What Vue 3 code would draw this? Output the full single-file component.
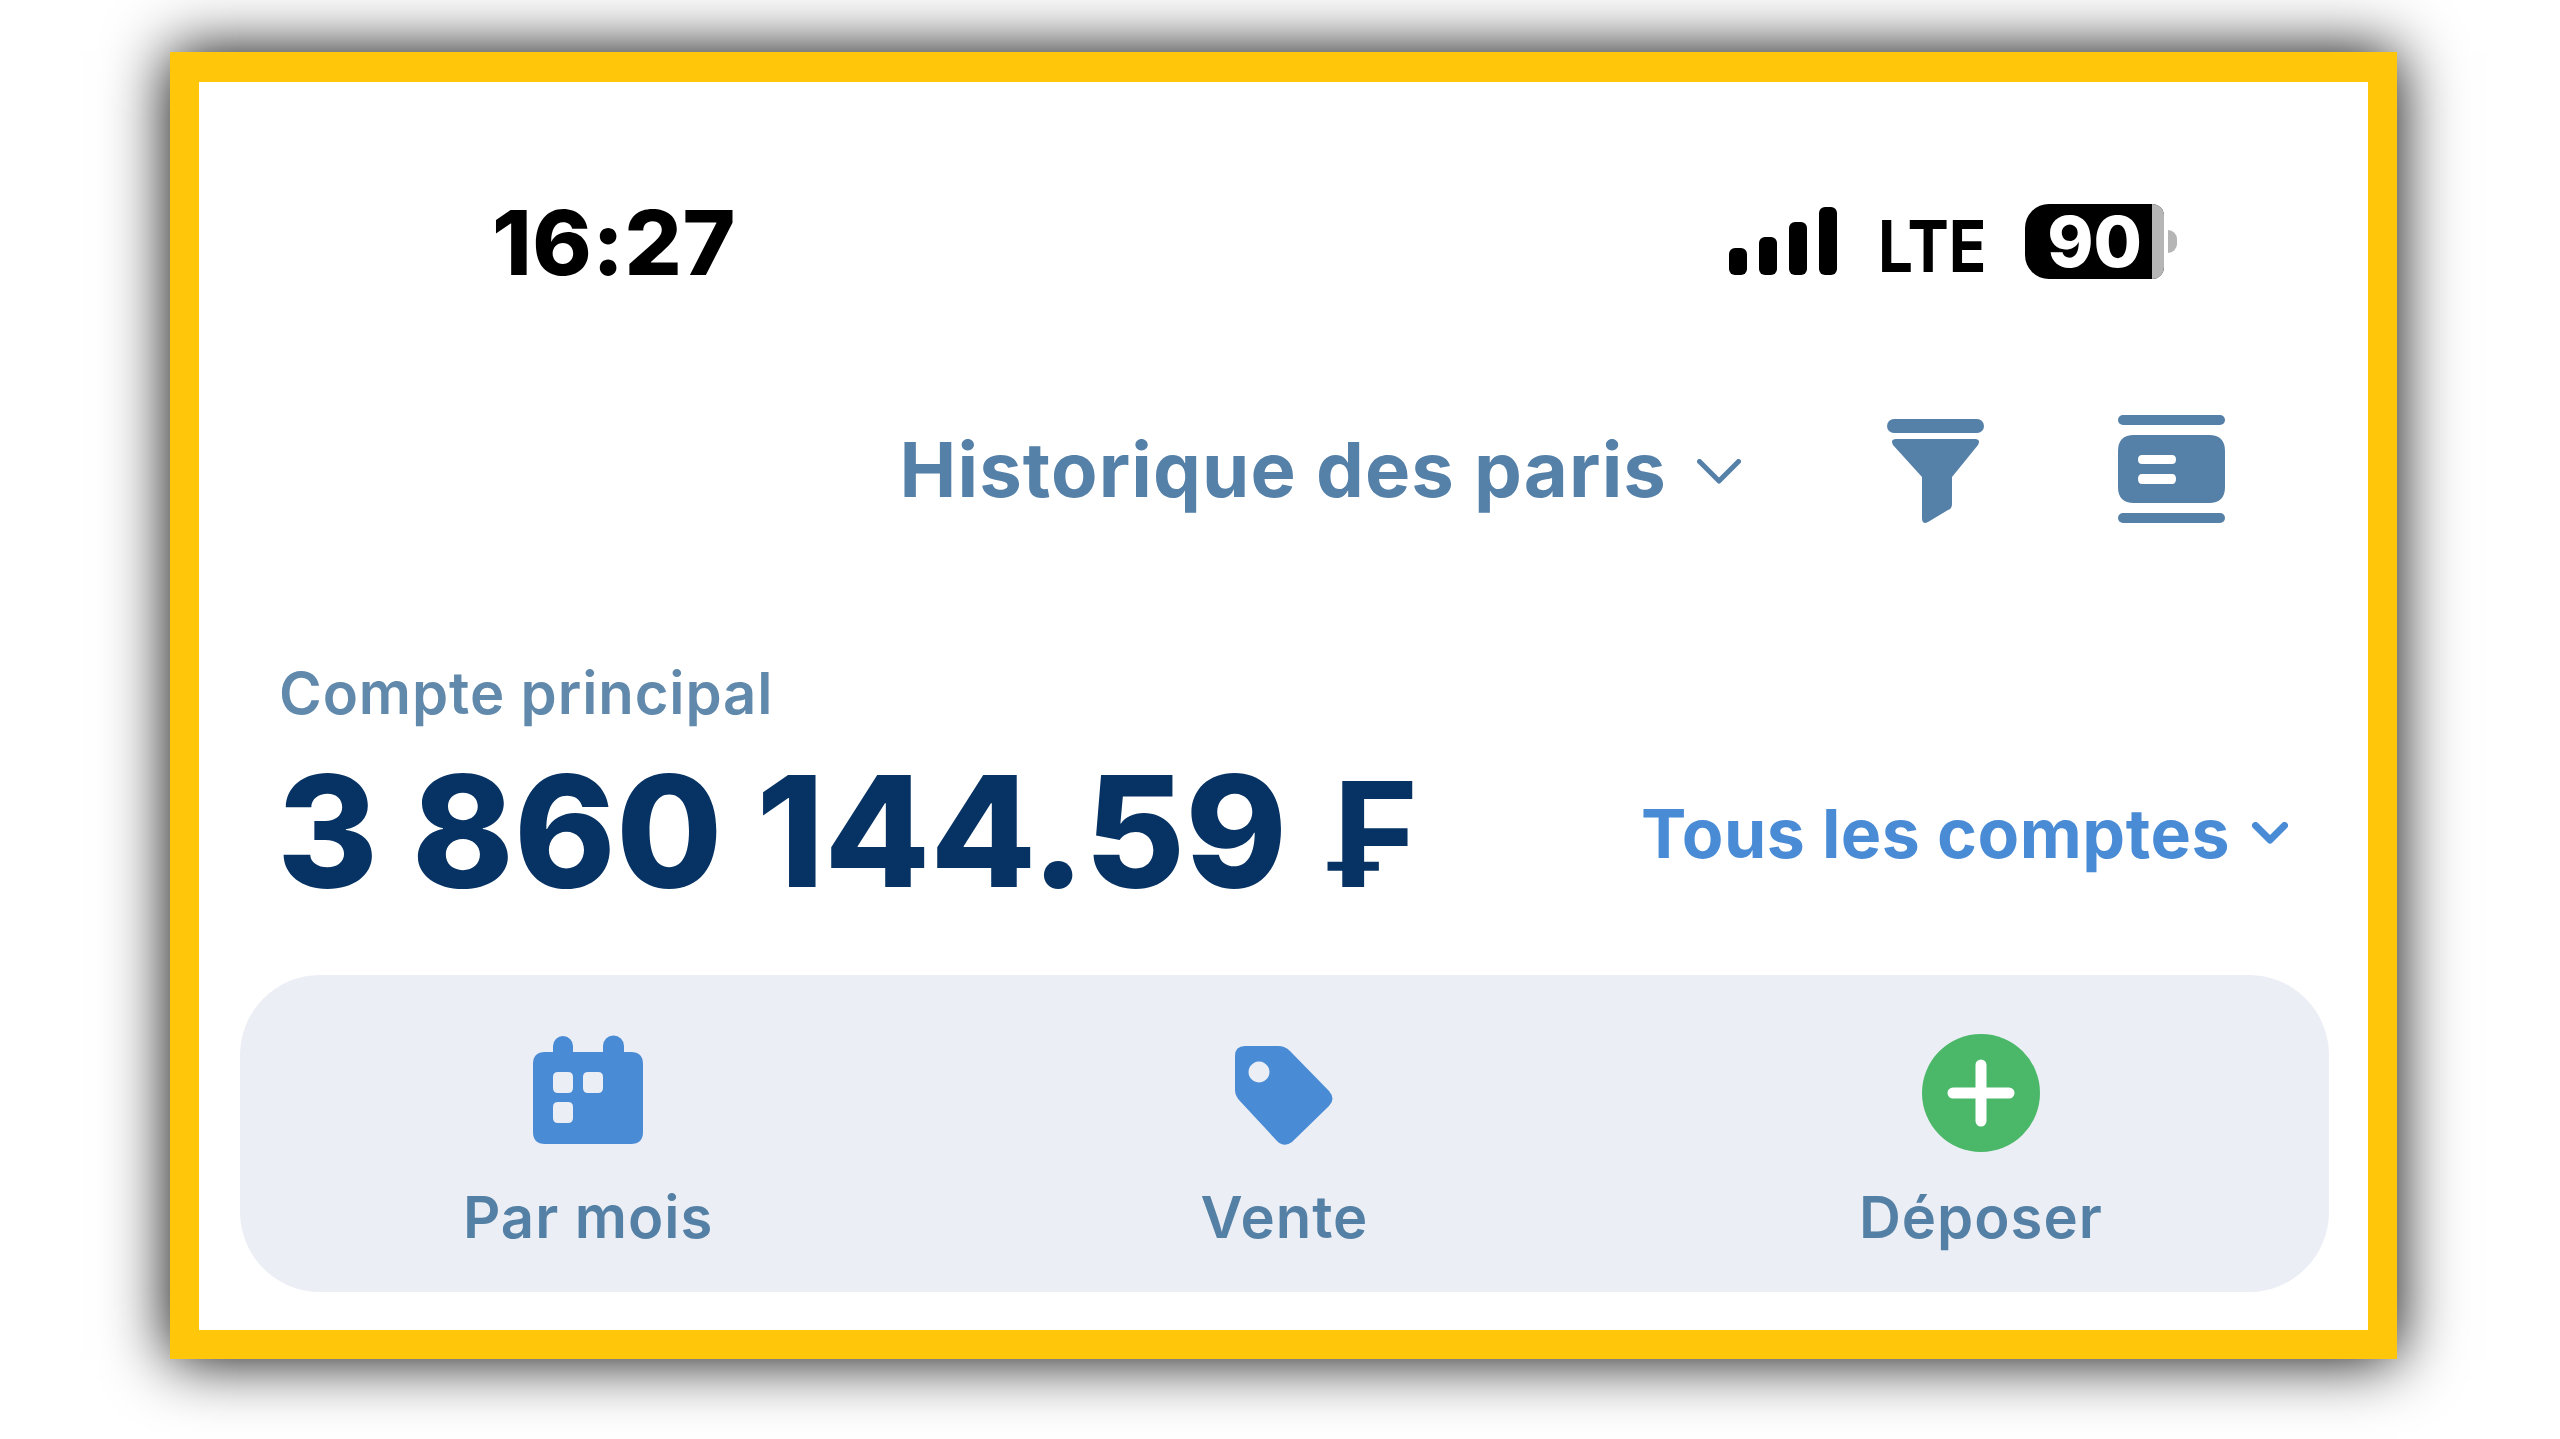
<template>
  <div class="page">
    <main class="frame">
      <div class="status">
        <span class="time">16:27</span>
        <div class="status-right">
          <svg class="bars" width="108" height="68" viewBox="0 0 108 68">
            <rect x="0" y="41" width="18" height="27" rx="6" />
            <rect x="30" y="30" width="18" height="38" rx="6" />
            <rect x="60" y="15" width="18" height="53" rx="6" />
            <rect x="90" y="0" width="18" height="68" rx="6" />
          </svg>
          <span class="lte"><span class="lte-in">LTE</span></span>
          <div class="batt">
            <div class="batt-body">
              <span class="batt-num">90</span>
              <span class="batt-rest"></span>
            </div>
            <span class="batt-nub"></span>
          </div>
        </div>
      </div>

      <header class="topbar">
        <h1 class="title">Historique des paris</h1>
        <svg class="chev" width="44" height="25" viewBox="0 0 44 25">
          <path d="M2.5 2.5 22 22 41.5 2.5" fill="none" stroke="#5580a8" stroke-width="5" stroke-linecap="round" stroke-linejoin="round" />
        </svg>
        <svg class="funnel" width="97" height="106" viewBox="0 0 97 106" fill="#5580a8">
          <rect x="0" y="0" width="97" height="14" rx="7" />
          <path d="M9 20H88Q94 20 91 26L65 58V85Q65 90 61 91L41 103Q35 106 35 99V58L6 26Q3 20 9 20Z" />
        </svg>
        <svg class="book" width="107" height="108" viewBox="0 0 107 108" fill="#5580a8">
          <rect x="0" y="0" width="107" height="10" rx="5" />
          <path fill-rule="evenodd" d="M16 20H91Q107 20 107 36V72Q107 88 91 88H16Q0 88 0 72V36Q0 20 16 20ZM24 40Q20 40 20 44.500Q20 49 24 49H54Q58 49 58 44.500Q58 40 54 40ZM24 59Q20 59 20 64Q20 69 24 69H54Q58 69 58 64Q58 59 54 59Z" />
          <rect x="0" y="98" width="107" height="10" rx="5" />
        </svg>
      </header>

      <p class="label">Compte principal</p>
      <div class="balance-row">
        <span class="balance">3 860 144.59 <span class="currency">₣</span></span>
        <button class="accounts">
          <span>Tous les comptes</span>
          <svg width="36" height="22" viewBox="0 0 36 22">
            <path d="M3.5 3.5 18 18 32.5 3.5" fill="none" stroke="#4a8bd6" stroke-width="7" stroke-linecap="round" stroke-linejoin="round" />
          </svg>
        </button>
      </div>

      <section class="panel">
        <div v-for="item in actions" :key="item.label" class="action">
          <svg width="120" height="120" viewBox="0 0 120 120">
            <template v-if="item.icon === 'calendar'">
              <path fill="#4a8bd6" fill-rule="evenodd" d="M25 13a10 10 0 0 1 20 0V19H75V13a10.500 10.500 0 0 1 21 0V19H103Q115 19 115 31V99Q115 111 103 111H17Q5 111 5 99V31Q5 19 17 19H25ZM30 39Q25 39 25 44V55Q25 60 30 60H40Q45 60 45 55V44Q45 39 40 39ZM60 39Q55 39 55 44V55Q55 60 60 60H70Q75 60 75 55V44Q75 39 70 39ZM30 69Q25 69 25 74V85Q25 90 30 90H40Q45 90 45 85V74Q45 69 40 69Z" />
            </template>
            <template v-else-if="item.icon === 'tag'">
              <path fill="#4a8bd6" fill-rule="evenodd" d="M21 13H54Q61 13 66 18L105 58Q112 66 105 73L68 109Q60 115 53 108L15 67Q11 62 11 57V23Q11 13 21 13ZM35 28.500a10.500 10.500 0 1 0 .01 0Z" />
            </template>
            <template v-else>
              <circle cx="60" cy="60" r="59" fill="#4ab868" />
              <path d="M60 32V88M32 60H88" stroke="#fff" stroke-width="11" stroke-linecap="round" />
            </template>
          </svg>
          <span class="action-label">{{ item.label }}</span>
        </div>
      </section>
    </main>
  </div>
</template>

<script setup>
const actions = [
  { label: 'Par mois', icon: 'calendar' },
  { label: 'Vente', icon: 'tag' },
  { label: 'Déposer', icon: 'plus' }
]
</script>

<style>
body { background: #fff; }
</style>

<style scoped>
.page {
  box-sizing: border-box;
  height: 1439px;
  padding: 52px 0 0 170px;
}
.frame {
  box-sizing: border-box;
  width: 2227px;
  height: 1307px;
  padding-top: 121px;
  border: solid #ffc60a;
  border-width: 30px 29px 29px;
  background: #fff;
  box-shadow: 0 0 60px #000;
  font-family: Inter, "Liberation Sans", sans-serif;
}
.status {
  display: flex;
  justify-content: space-between;
  align-items: center;
  height: 76px;
  padding: 0 191px 0 293px;
}
.time { margin-top: 3px; font-size: 90px; font-weight: 800; line-height: 76px; color: #000; letter-spacing: 0.5px; }
.status-right { display: flex; align-items: center; }
.bars { fill: #000; }
.lte { width: 105px; margin: 9px 42px 0 41px; }
.lte-in {
  display: inline-block;
  font-size: 72px;
  font-weight: 700;
  line-height: 60px;
  color: #000;
  transform: scaleX(.86);
  transform-origin: left center;
}
.batt { display: flex; align-items: center; }
.batt-body {
  display: flex;
  width: 139px;
  height: 75px;
  background: #000;
  border-radius: 24px 12px 12px 24px;
}
.batt-num {
  flex: 1;
  padding-left: 12px;
  color: #fff;
  font-size: 70px;
  font-weight: 800;
  line-height: 75px;
  text-align: center;
}
.batt-rest { width: 12px; background: #b5b5b5; border-radius: 0 12px 12px 0; }
.batt-nub { width: 9px; height: 23px; margin-left: 4px; background: #b5b5b5; border-radius: 0 12px 12px 0; }
.topbar {
  display: flex;
  justify-content: flex-end;
  align-items: center;
  height: 108px;
  margin-top: 136px;
  padding-right: 143px;
}
.title { margin: 0; font-size: 76px; font-weight: 700; line-height: 108px; color: #5580a8; letter-spacing: 1.1px; white-space: nowrap; }
.chev { margin-left: 30px; margin-top: 4px; }
.funnel { margin-left: 146px; margin-top: 6px; }
.book { margin-left: 134px; }
.label {
  margin: 135px 0 0;
  padding-left: 80px;
  font-size: 58px;
  font-weight: 600;
  line-height: 70px;
  color: #6189ab;
  letter-spacing: 0.9px;
}
.balance-row {
  display: flex;
  justify-content: space-between;
  align-items: center;
  height: 160px;
  margin-top: 24px;
  padding: 0 80px 0 81px;
}
.balance { margin-left: -3px; font-size: 154px; font-weight: 800; line-height: 160px; color: #073364; white-space: nowrap; }
.currency { margin-left: 8px; font-size: 146px; font-weight: 700; }
.accounts {
  display: flex;
  align-items: center;
  gap: 22px;
  margin-top: 2px;
  padding: 0;
  border: 0;
  background: none;
  font: inherit;
  font-size: 68px;
  font-weight: 700;
  line-height: 80px;
  color: #4a8bd6;
  letter-spacing: 0.5px;
}
.panel {
  display: grid;
  grid-template-columns: repeat(3, 1fr);
  box-sizing: border-box;
  height: 317px;
  margin: 63px 39px 0 41px;
  padding-top: 58px;
  background: #ebeef4;
  border-radius: 80px;
}
.action { display: flex; flex-direction: column; align-items: center; }
.action-label { margin-top: 29px; font-size: 58px; font-weight: 600; line-height: 70px; color: #5580a5; letter-spacing: 1px; }
</style>
